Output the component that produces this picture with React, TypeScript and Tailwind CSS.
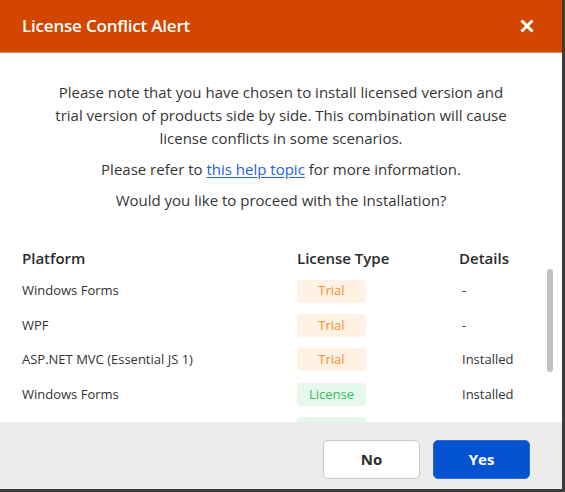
import React from "react";

const rows = [
  { platform: "Windows Forms", type: "Trial", details: "-" },
  { platform: "WPF", type: "Trial", details: "-" },
  { platform: "ASP.NET MVC (Essential JS 1)", type: "Trial", details: "Installed" },
  { platform: "Windows Forms", type: "License", details: "Installed" },
  { platform: "WPF", type: "License", details: "Installed" },
  { platform: "ASP.NET Core", type: "License", details: "Installed" },
];

export default function App() {
  return (
    <div
      className="w-[565px] h-[492px] bg-white border-r-[3px] border-b-[3px] border-[#3c3c3c] flex flex-col overflow-hidden text-[#333333]"
      style={{ fontFamily: '"Open Sans", "Noto Sans", sans-serif' }}
    >
      <div className="h-[53px] shrink-0 bg-[#d34600] border-b border-[#e5824f] flex items-center justify-between pl-[22px] pr-[26px]">
        <span className="text-white text-[17px] font-semibold tracking-[-0.2px]">License Conflict Alert</span>
        <svg width="16" height="16" viewBox="0 0 16 16" className="mr-[1px]">
          <path d="M2.5 2.5 L13.5 13.5 M13.5 2.5 L2.5 13.5" stroke="white" strokeWidth="3" strokeLinecap="butt" />
        </svg>
      </div>

      <div className="flex-1 flex flex-col min-h-0 relative">
        <div className="pt-[28px] w-[458px] mx-auto text-center text-[15px] leading-[23px] flex flex-col gap-[8px] text-[#363636]">
          <p>
            Please note that you have chosen to install licensed version and trial version of products side by side. This
            combination will cause license conflicts in some scenarios.
          </p>
          <p>
            Please refer to{" "}
            <a className="text-[#1a62e6] underline underline-offset-2" href="#">
              this help topic
            </a>{" "}
            for more information.
          </p>
          <p>Would you like to proceed with the Installation?</p>
        </div>

        <div className="mt-[35px] grid grid-cols-[275px_162px_1fr] pl-[22px] text-[15px] font-semibold text-[#2b2b2b] leading-[23px]">
          <div>Platform</div>
          <div>License Type</div>
          <div>Details</div>
        </div>

        <div className="flex-1 min-h-0 overflow-hidden mt-[4px]">
          {rows.map((r, i) => (
            <div key={i} className="grid grid-cols-[275px_165px_1fr] pl-[22px] h-[34.4px] items-center text-[13px] text-[#333333]">
              <div>{r.platform}</div>
              <div>
                <span
                  className={
                    r.type === "Trial"
                      ? "inline-flex items-center justify-center w-[69px] h-[23px] rounded-[4px] bg-[#fff1e4] text-[#f68f2a]"
                      : "inline-flex items-center justify-center w-[69px] h-[23px] rounded-[4px] bg-[#e6f8ec] text-[#2fbf5c]"
                  }
                >
                  {r.type}
                </span>
              </div>
              <div>{r.details}</div>
            </div>
          ))}
        </div>
        <div className="absolute left-[547px] top-[216px] w-[6px] h-[103px] rounded-full bg-[#c2c2c2]" />
      </div>

      <div className="h-[67px] shrink-0 bg-[#ececec] flex items-start justify-end gap-[13px] pt-[18px] pr-[32px]">
        <button className="w-[97px] h-[39px] rounded-[5px] bg-white border border-[#c9c9c9] text-[15px] font-bold text-[#2b2b2b]">
          No
        </button>
        <button className="w-[97px] h-[39px] rounded-[5px] bg-[#0553d1] border border-[#2c6ad6] text-[15px] font-bold text-white">
          Yes
        </button>
      </div>
    </div>
  );
}
